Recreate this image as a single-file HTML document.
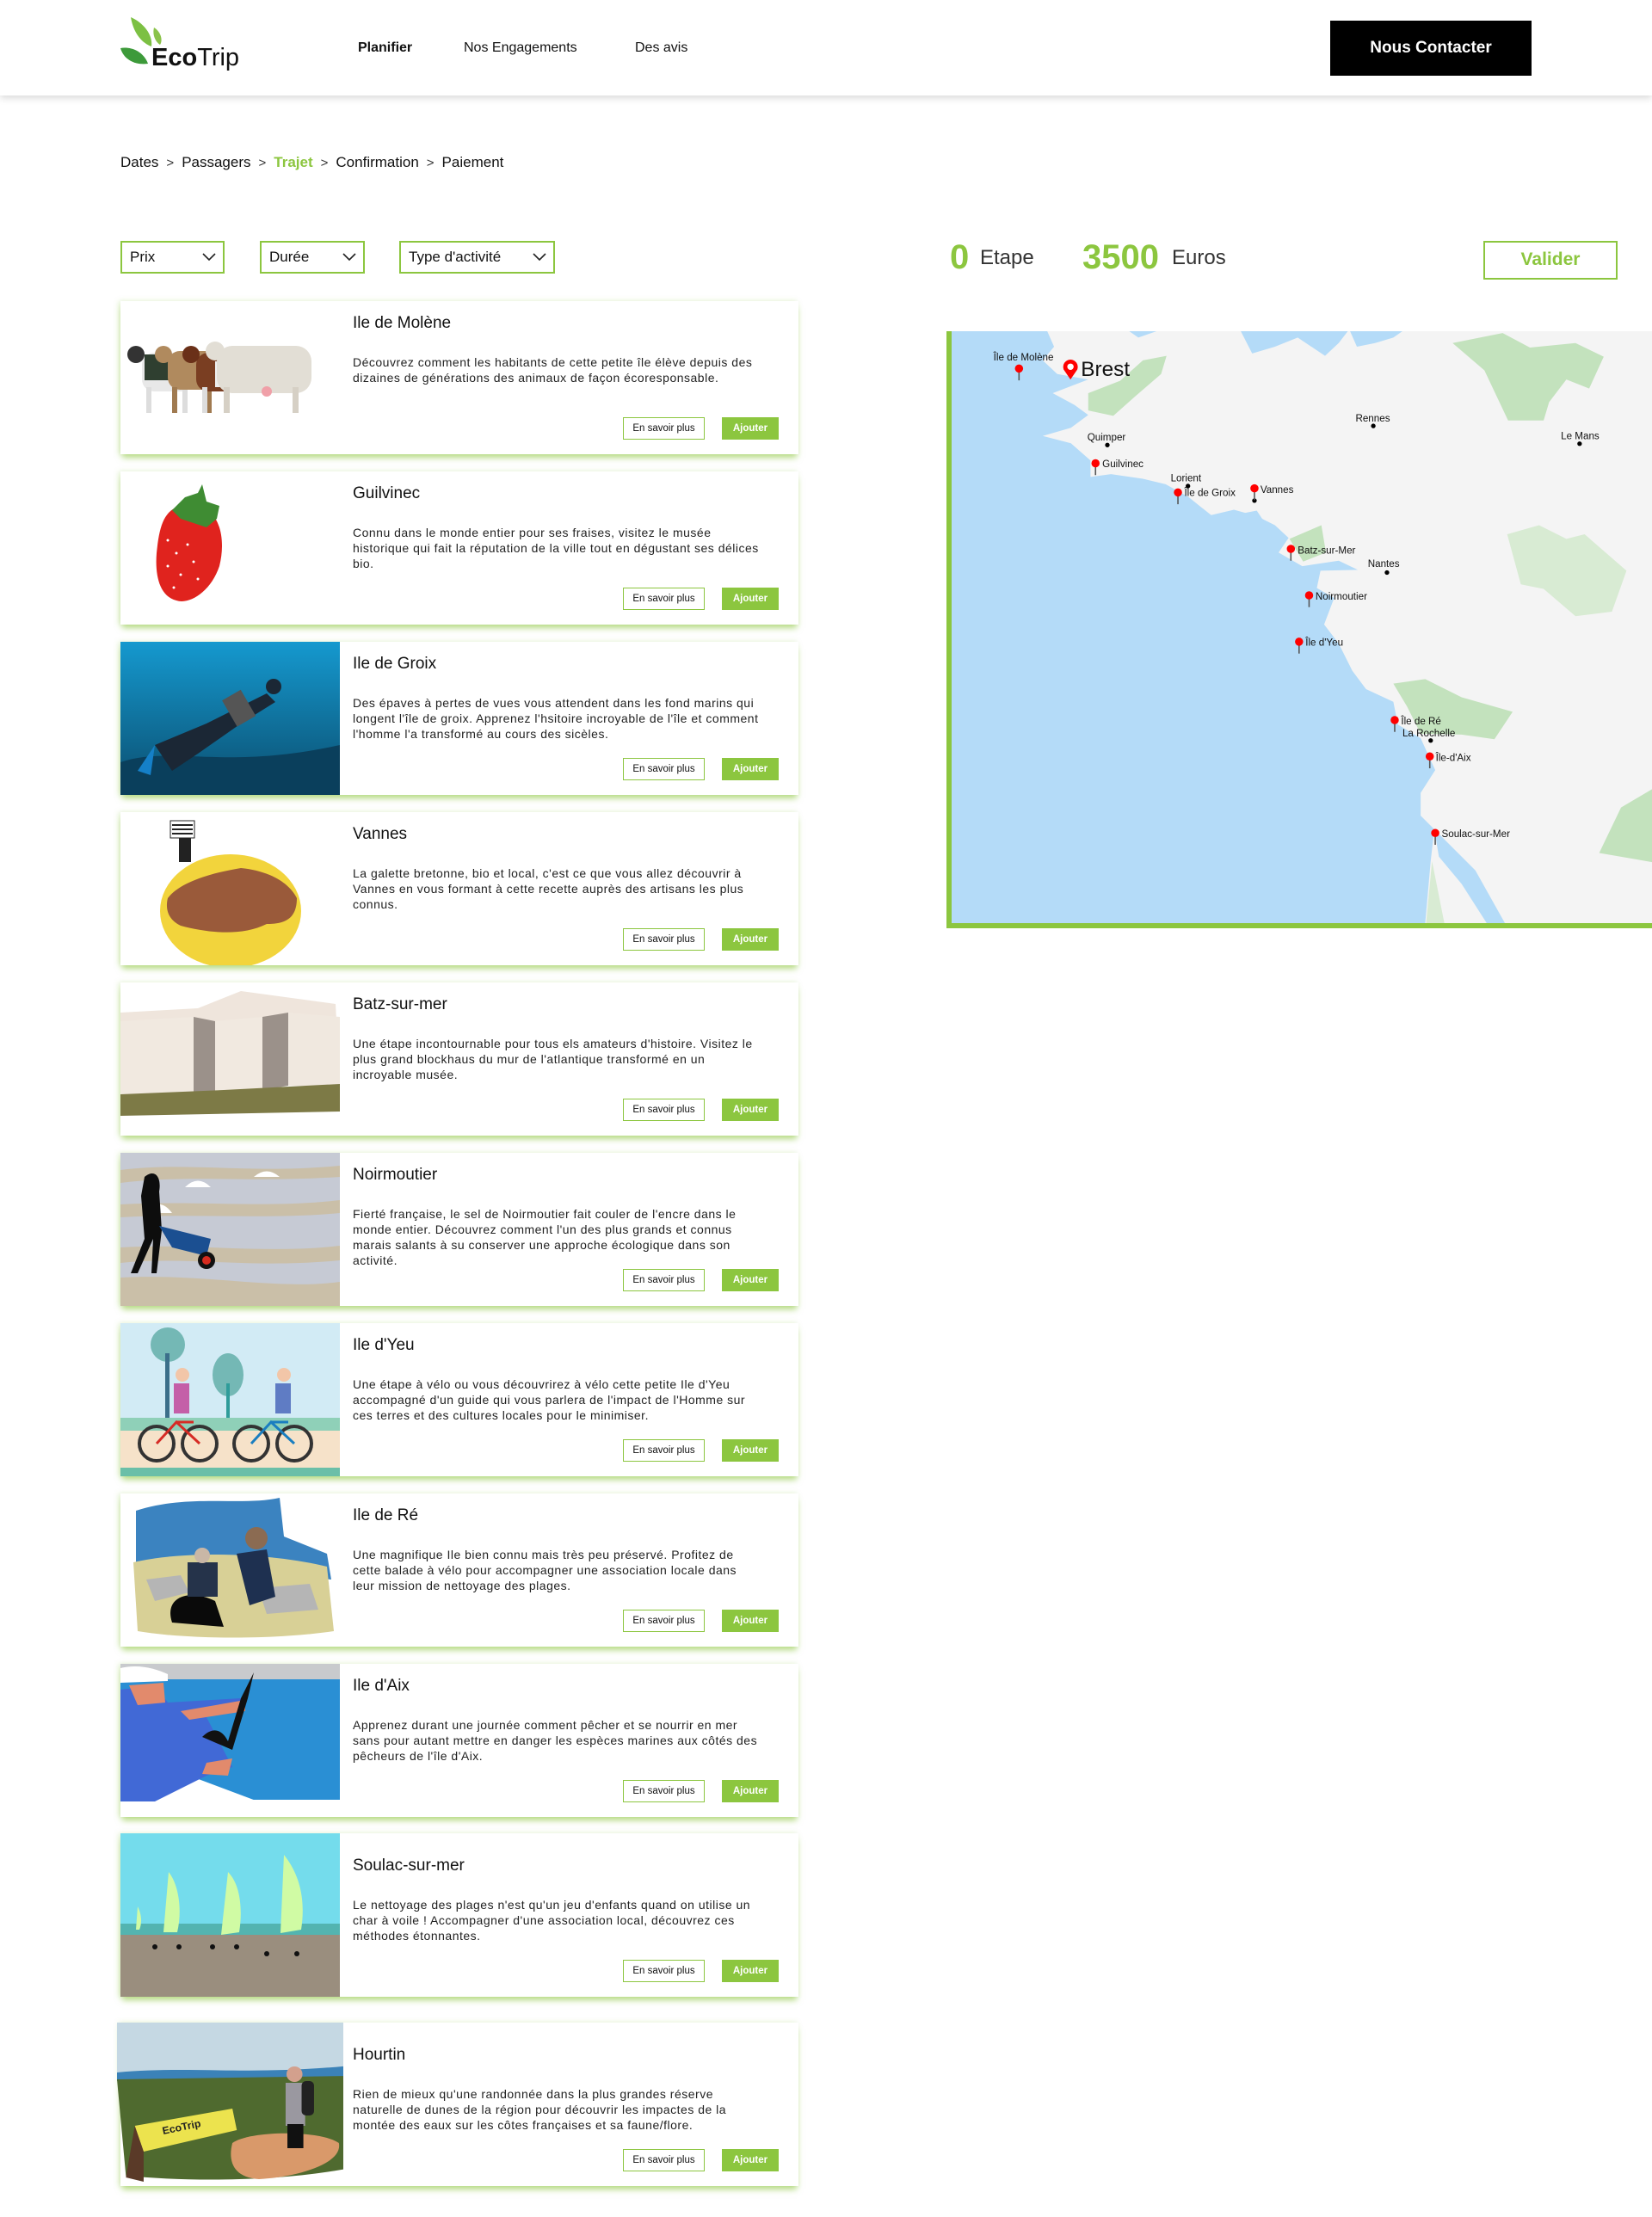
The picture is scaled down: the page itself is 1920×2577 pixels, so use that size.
<!DOCTYPE html>
<html><head><meta charset="utf-8">
<style>
*{margin:0;padding:0;box-sizing:border-box}
body{width:1920px;height:2577px;background:#fff;font-family:"Liberation Sans",Arial,sans-serif;color:#111;position:relative;overflow:hidden}
.abs{position:absolute}
header{position:absolute;left:0;top:0;width:1920px;height:111px;background:#fff;box-shadow:0 3px 8px rgba(0,0,0,.15)}
.nav{position:absolute;top:47px;font-size:16px;color:#111}
.btnc{position:absolute;left:1546px;top:24px;width:234px;height:64px;background:#000;color:#fff;font-weight:bold;font-size:19px;text-align:center;line-height:64px}
.bc{position:absolute;top:179px;left:140px;font-size:17px;color:#111;white-space:nowrap}
.bc .s{display:inline-block;margin:0 9px;color:#333;font-size:15px}
.sel{position:absolute;top:280px;height:38px;border:2px solid #8cc63f;font-size:17px;line-height:34px;padding-left:9px}
.sel svg{position:absolute;right:8px;top:12px}
.card{position:absolute;left:140px;width:788px;background:#fff;box-shadow:0 6px 7px -2px rgba(141,198,63,.6),-2px 0 6px rgba(141,198,63,.25)}
.card>svg{position:absolute;left:0;top:0;width:255px;height:100%}
.card h3{position:absolute;left:270px;font-size:19px;font-weight:normal;line-height:22px;color:#111}
.card p{position:absolute;left:270px;width:472px;font-size:14px;letter-spacing:.5px;line-height:18px;color:#222}
.b1,.b2{position:absolute;height:26px;font-size:11.5px;text-align:center;line-height:24px}
.b1{left:584px;width:95px;border:1.5px solid #8cc63f;color:#111;background:#fff}
.b2{left:699px;width:66px;background:#8cc63f;color:#fff;font-weight:bold;line-height:26px}
</style></head><body>
<header>
<svg class="abs" style="left:136px;top:18px" width="60" height="64" viewBox="0 0 60 64">
<path d="M16 2 C30 8 42 22 40 36 C34 34 20 26 16 2 Z" fill="#7cc043"/>
<path d="M43 14 C50 18 54 28 50 34 C44 30 41 22 43 14Z" fill="#8bc34a"/>
<path d="M4 38 C14 36 30 40 36 56 C22 58 8 52 4 38Z" fill="#3d9a3a"/>
</svg>
<div class="abs" style="left:176px;top:50px;font-size:29px;line-height:34px;color:#111"><b>Eco</b>Trip</div>
<div class="nav" style="left:416px;font-weight:bold">Planifier</div>
<div class="nav" style="left:539px">Nos Engagements</div>
<div class="nav" style="left:738px">Des avis</div>
<div class="btnc">Nous Contacter</div>
</header>

<div class="bc">Dates<span class="s">&gt;</span>Passagers<span class="s">&gt;</span><span style="color:#8cc63f;font-weight:bold">Trajet</span><span class="s">&gt;</span>Confirmation<span class="s">&gt;</span>Paiement</div>

<div class="sel" style="left:140px;width:121px">Prix<svg width="16" height="10"><path d="M1 1 L8 8 L15 1" stroke="#222" stroke-width="1.6" fill="none"/></svg></div>
<div class="sel" style="left:302px;width:122px">Durée<svg width="16" height="10"><path d="M1 1 L8 8 L15 1" stroke="#222" stroke-width="1.6" fill="none"/></svg></div>
<div class="sel" style="left:464px;width:181px">Type d'activité<svg width="16" height="10"><path d="M1 1 L8 8 L15 1" stroke="#222" stroke-width="1.6" fill="none"/></svg></div>

<div class="abs" style="left:1104px;top:276px;font-size:40px;font-weight:bold;color:#8cc63f;line-height:46px">0</div>
<div class="abs" style="left:1139px;top:286px;font-size:24px;color:#333;line-height:28px">Etape</div>
<div class="abs" style="left:1258px;top:276px;font-size:40px;font-weight:bold;color:#8cc63f;line-height:46px">3500</div>
<div class="abs" style="left:1362px;top:286px;font-size:24px;color:#333;line-height:28px">Euros</div>
<div class="abs" style="left:1724px;top:280px;width:156px;height:45px;border:2.5px solid #8cc63f;color:#8cc63f;font-size:21px;font-weight:bold;text-align:center;line-height:40px">Valider</div>

<!-- MAP -->
<div class="abs" style="left:1100px;top:385px;width:820px;height:694px;border-left:6px solid #8cc63f;border-bottom:6px solid #8cc63f;overflow:hidden">
<svg width="814" height="688" viewBox="30 236 1538 1300" preserveAspectRatio="none" style="display:block">
<rect x="30" y="236" width="1538" height="1300" fill="#b4dbf8"/>
<path d="M240 236 L255 270 L230 300 L262 330 L330 342 L252 372 L300 398 L330 420 L292 448 L230 466 L292 482 L335 520 L335 556 L380 550 L450 560 L500 572 L550 600 L600 640 L650 628 L700 642 L740 662 L770 690 L748 722 L800 752 L880 740 L922 760 L840 762 L832 800 L870 822 L848 880 L880 922 L910 982 L940 1022 L1000 1050 L1010 1100 L1060 1130 L1092 1200 L1060 1250 L1060 1300 L1090 1330 L1082 1400 L1070 1536 L1568 1536 L1568 236 Z" fill="#f4f4f4"/>
<path d="M665 236 L690 285 L740 270 L790 250 L850 290 L880 262 L900 236 Z M905 236 L920 270 L960 262 L1000 250 L1020 236Z M420 236 L440 250 L480 236Z" fill="#b4dbf8"/>
<path d="M1090 1330 L1120 1360 L1180 1420 L1245 1536 L1205 1536 L1150 1450 L1100 1390Z M650 640 L700 630 L720 660 L670 668Z M580 720 L620 740 L600 750 L575 735Z" fill="#b4dbf8"/>
<path d="M330 372 L400 345 L450 300 L502 290 L490 330 L432 380 L385 422 L330 410Z" fill="#c3e2bd"/>
<path d="M1130 262 L1240 240 L1300 272 L1400 262 L1462 292 L1430 362 L1380 342 L1342 392 L1330 432 L1252 432 L1200 322Z" fill="#c3e2bd"/>
<path d="M1250 682 L1320 662 L1380 692 L1420 682 L1512 762 L1480 852 L1400 862 L1330 802 L1280 792Z" fill="#d8ebd3"/>
<path d="M772 692 L842 662 L852 722 L802 742Z" fill="#c3e2bd"/>
<path d="M1000 1010 L1070 1000 L1150 1040 L1262 1072 L1222 1132 L1150 1122 L1060 1120 L1030 1060Z" fill="#c3e2bd"/>
<path d="M1500 1282 L1568 1242 L1568 1402 L1452 1382Z" fill="#c3e2bd"/>
<path d="M1085 1400 L1112 1536 L1072 1536Z" fill="#d8ebd3"/>
<g fill="#000">
<circle cx="372" cy="486" r="5"/><circle cx="549" cy="576" r="5"/><circle cx="956" cy="444" r="5"/><circle cx="1409" cy="483" r="5"/><circle cx="986" cy="766" r="5"/><circle cx="1082" cy="1135" r="5"/><circle cx="695" cy="608" r="5"/>
</g>
<g stroke="#555" stroke-width="3">
<line x1="178" y1="320" x2="178" y2="344"/><line x1="346" y1="528" x2="346" y2="552"/><line x1="527" y1="592" x2="527" y2="616"/><line x1="695" y1="583" x2="695" y2="607"/><line x1="775" y1="716" x2="775" y2="740"/><line x1="815" y1="818" x2="815" y2="842"/><line x1="793" y1="920" x2="793" y2="944"/><line x1="1003" y1="1092" x2="1003" y2="1116"/><line x1="1080" y1="1172" x2="1080" y2="1196"/><line x1="1092" y1="1340" x2="1092" y2="1364"/>
</g>
<g fill="#f00">
<circle cx="178" cy="318" r="9"/><circle cx="346" cy="526" r="9"/><circle cx="527" cy="590" r="9"/><circle cx="695" cy="581" r="9"/><circle cx="775" cy="714" r="9"/><circle cx="815" cy="816" r="9"/><circle cx="793" cy="918" r="9"/><circle cx="1003" cy="1090" r="9"/><circle cx="1080" cy="1170" r="9"/><circle cx="1092" cy="1338" r="9"/>
</g>
<path d="M291 342 L276 320 A16 16 0 1 1 306 320 Z" fill="#f00"/><circle cx="291" cy="314" r="7" fill="#fff"/>
<g font-family="Liberation Sans, sans-serif" font-size="22" fill="#111">
<text x="122" y="300">Île de Molène</text>
<text x="314" y="334" font-size="46">Brest</text>
<text x="328" y="476">Quimper</text>
<text x="361" y="535">Guilvinec</text>
<text x="511" y="566">Lorient</text>
<text x="541" y="598">Île de Groix</text>
<text x="708" y="591">Vannes</text>
<text x="790" y="724">Batz-sur-Mer</text>
<text x="944" y="754">Nantes</text>
<text x="829" y="826">Noirmoutier</text>
<text x="807" y="927">Île d'Yeu</text>
<text x="917" y="434">Rennes</text>
<text x="1368" y="473">Le Mans</text>
<text x="1017" y="1100">Île de Ré</text>
<text x="1020" y="1126">La Rochelle</text>
<text x="1093" y="1180">Île-d'Aix</text>
<text x="1106" y="1347">Soulac-sur-Mer</text>
</g>
</svg>
</div>

<!-- CARDS -->
<div class="card" style="top:350px;height:178px">
<svg viewBox="0 0 255 178" preserveAspectRatio="none">
<g><rect x="25" y="60" width="60" height="45" rx="14" fill="#e8e8e8"/><rect x="28" y="62" width="30" height="30" fill="#2f3f30"/><rect x="30" y="100" width="6" height="30" fill="#ddd"/><rect x="72" y="100" width="6" height="30" fill="#ddd"/><circle cx="18" cy="62" r="10" fill="#333"/>
<rect x="55" y="58" width="60" height="45" rx="14" fill="#b08a5e"/><rect x="60" y="100" width="6" height="30" fill="#a07a50"/><rect x="100" y="100" width="6" height="30" fill="#a07a50"/><circle cx="50" cy="62" r="10" fill="#b08a5e"/>
<rect x="88" y="60" width="55" height="45" rx="14" fill="#7a3e22"/><rect x="110" y="70" width="30" height="30" fill="#eee"/><rect x="95" y="100" width="6" height="30" fill="#ddd"/><circle cx="82" cy="62" r="10" fill="#6a3018"/>
<rect x="112" y="52" width="110" height="55" rx="18" fill="#e2ded5"/><rect x="120" y="100" width="7" height="30" fill="#d6d0c5"/><rect x="200" y="100" width="7" height="30" fill="#d6d0c5"/><circle cx="170" cy="105" r="6" fill="#f0a0a8"/><circle cx="110" cy="58" r="11" fill="#e2ded5"/></g>
</svg>
<h3 style="top:15px">Ile de Molène</h3>
<p style="top:62px">Découvrez comment les habitants de cette petite île élève depuis des dizaines de générations des animaux de façon écoresponsable.</p>
<div class="b1" style="top:135px">En savoir plus</div><div class="b2" style="top:135px">Ajouter</div>
</div>

<div class="card" style="top:548px;height:178px">
<svg viewBox="0 0 255 178" preserveAspectRatio="none">
<path d="M70 40 C110 30 125 70 115 110 C105 140 80 155 65 150 C45 145 40 120 42 95 C45 65 50 45 70 40Z" fill="#e0231e"/>
<path d="M60 45 L75 30 L90 25 L95 15 L100 35 L115 40 L112 55 L100 65 L85 60 L70 55Z" fill="#3f8c33"/>
<g fill="#fff"><circle cx="55" cy="80" r="1.5"/><circle cx="65" cy="95" r="1.5"/><circle cx="78" cy="85" r="1.5"/><circle cx="55" cy="110" r="1.5"/><circle cx="70" cy="120" r="1.5"/><circle cx="85" cy="105" r="1.5"/><circle cx="62" cy="135" r="1.5"/><circle cx="90" cy="125" r="1.5"/></g>
</svg>
<h3 style="top:15px">Guilvinec</h3>
<p style="top:62px">Connu dans le monde entier pour ses fraises, visitez le musée historique qui fait la réputation de la ville tout en dégustant ses délices bio.</p>
<div class="b1" style="top:135px">En savoir plus</div><div class="b2" style="top:135px">Ajouter</div>
</div>

<div class="card" style="top:746px;height:178px">
<svg viewBox="0 0 255 178" preserveAspectRatio="none">
<defs><linearGradient id="g1" x1="0" y1="0" x2="0" y2="1"><stop offset="0" stop-color="#1599cf"/><stop offset="1" stop-color="#0b4d6e"/></linearGradient></defs>
<rect width="255" height="178" fill="url(#g1)"/>
<path d="M0 140 C60 120 120 150 255 120 L255 178 L0 178Z" fill="#0a3f5c"/>
<path d="M40 120 L100 95 L130 80 L170 60 L180 70 L140 95 L90 130 L60 150Z" fill="#1b2735"/>
<rect x="125" y="60" width="25" height="35" fill="#555" transform="rotate(-30 137 77)"/>
<circle cx="178" cy="52" r="9" fill="#1b2735"/>
<path d="M40 120 L20 150 L35 155Z" fill="#1580c8"/>
</svg>
<h3 style="top:15px">Ile de Groix</h3>
<p style="top:62px">Des épaves à pertes de vues vous attendent dans les fond marins qui longent l'île de groix. Apprenez l'hsitoire incroyable de l'île et comment l'homme l'a transformé au cours des sicèles.</p>
<div class="b1" style="top:135px">En savoir plus</div><div class="b2" style="top:135px">Ajouter</div>
</div>

<div class="card" style="top:944px;height:178px">
<svg viewBox="0 0 255 178" preserveAspectRatio="none">
<ellipse cx="128" cy="115" rx="82" ry="66" fill="#f2d43c"/>
<path d="M55 100 C70 80 110 70 140 65 C170 68 195 80 205 100 C205 125 190 130 170 130 C140 145 100 140 70 132 C55 125 52 112 55 100Z" fill="#9a5a3a"/>
<rect x="58" y="10" width="28" height="20" fill="#fff" stroke="#222"/><path d="M60 15 H84 M60 20 H84 M60 25 H84" stroke="#222" stroke-width="2"/>
<rect x="68" y="30" width="14" height="28" fill="#222"/>
</svg>
<h3 style="top:15px">Vannes</h3>
<p style="top:62px">La galette bretonne, bio et local, c'est ce que vous allez découvrir à Vannes en vous formant à cette recette auprès des artisans les plus connus.</p>
<div class="b1" style="top:135px">En savoir plus</div><div class="b2" style="top:135px">Ajouter</div>
</div>

<div class="card" style="top:1142px;height:178px">
<svg viewBox="0 0 255 178" preserveAspectRatio="none">
<path d="M0 35 L90 30 L140 10 L250 25 L255 120 L0 120Z" fill="#efe5dc"/>
<path d="M0 45 L85 40 L85 130 L0 130Z" fill="#f1e9e0"/>
<path d="M85 40 L110 45 L110 130 L85 130Z" fill="#9b918a"/>
<path d="M110 45 L165 40 L165 125 L110 130Z" fill="#f1e9e0"/>
<path d="M165 40 L195 35 L195 120 L165 125Z" fill="#9b918a"/>
<path d="M195 35 L255 40 L255 118 L195 120Z" fill="#f0e8df"/>
<path d="M0 130 L120 125 L255 118 L255 150 L0 155Z" fill="#7d7a46"/>
</svg>
<h3 style="top:15px">Batz-sur-mer</h3>
<p style="top:62px">Une étape incontournable pour tous els amateurs d'histoire. Visitez le plus grand blockhaus du mur de l'atlantique transformé en un incroyable musée.</p>
<div class="b1" style="top:135px">En savoir plus</div><div class="b2" style="top:135px">Ajouter</div>
</div>

<div class="card" style="top:1340px;height:178px">
<svg viewBox="0 0 255 178" preserveAspectRatio="none">
<rect width="255" height="178" fill="#c6cad4"/>
<path d="M0 20 C80 10 150 25 255 15 L255 28 C150 35 80 25 0 35Z M0 60 C90 55 170 65 255 55 L255 70 C170 78 80 70 0 75Z M0 110 C90 105 170 118 255 108 L255 125 C150 135 80 120 0 128Z M0 145 C100 140 180 160 255 150 L255 178 L0 178Z" fill="#cabfa8"/>
<path d="M75 40 Q90 25 105 40Z M155 28 Q170 15 185 28Z M30 70 Q45 50 60 70Z" fill="#fff"/>
<path d="M28 28 C40 18 48 28 45 45 L48 90 L42 140 L36 140 L38 100 L20 140 L12 140 L28 100 L24 50Z" fill="#0d0d0d"/>
<path d="M45 85 L105 100 L100 120 L60 110Z" fill="#1b4f91"/>
<circle cx="100" cy="125" r="10" fill="#111"/><circle cx="100" cy="125" r="5" fill="#d62b1f"/>
</svg>
<h3 style="top:15px">Noirmoutier</h3>
<p style="top:62px">Fierté française, le sel de Noirmoutier fait couler de l'encre dans le monde entier. Découvrez comment l'un des plus grands et connus marais salants à su conserver une approche écologique dans son activité.</p>
<div class="b1" style="top:135px">En savoir plus</div><div class="b2" style="top:135px">Ajouter</div>
</div>

<div class="card" style="top:1538px;height:178px">
<svg viewBox="0 0 255 178" preserveAspectRatio="none">
<rect width="255" height="178" fill="#d2ebf5"/>
<rect y="110" width="255" height="15" fill="#8fd0b8"/>
<rect y="125" width="255" height="45" fill="#f6e2c9"/>
<rect y="168" width="255" height="10" fill="#6bbfa8"/>
<circle cx="55" cy="25" r="20" fill="#74b8b5"/><rect x="52" y="35" width="5" height="75" fill="#3c6f8a"/>
<ellipse cx="125" cy="60" rx="18" ry="25" fill="#74b8b5"/><rect x="123" y="70" width="4" height="40" fill="#2f9c9a"/>
<g fill="none" stroke="#333" stroke-width="4"><circle cx="42" cy="140" r="20"/><circle cx="92" cy="140" r="20"/><circle cx="152" cy="140" r="20"/><circle cx="202" cy="140" r="20"/></g>
<path d="M42 140 L65 115 L92 140 M65 115 L85 115" stroke="#d62b25" stroke-width="3" fill="none"/>
<path d="M152 140 L175 115 L202 140 M175 115 L195 115" stroke="#1a7ec0" stroke-width="3" fill="none"/>
<rect x="62" y="70" width="18" height="35" fill="#c45fa8"/><circle cx="72" cy="60" r="8" fill="#f2c6a8"/>
<rect x="180" y="70" width="18" height="35" fill="#5f7cc4"/><circle cx="190" cy="60" r="8" fill="#f2c6a8"/>
</svg>
<h3 style="top:15px">Ile d'Yeu</h3>
<p style="top:62px">Une étape à vélo ou vous découvrirez à vélo cette petite Ile d'Yeu accompagné d'un guide qui vous parlera de l'impact de l'Homme sur ces terres et des cultures locales pour le minimiser.</p>
<div class="b1" style="top:135px">En savoir plus</div><div class="b2" style="top:135px">Ajouter</div>
</div>

<div class="card" style="top:1736px;height:178px">
<svg viewBox="0 0 255 178" preserveAspectRatio="none">
<path d="M18 20 C80 0 140 15 185 5 L190 50 L240 70 L245 100 L18 80Z" fill="#3b83c0"/>
<path d="M15 80 C80 65 180 70 240 85 L248 160 C180 170 80 170 20 160Z" fill="#d8d096"/>
<g fill="#b5b5b5"><path d="M30 100 L70 95 L80 115 L40 125Z"/><path d="M160 110 L220 105 L230 135 L170 140Z"/></g>
<path d="M60 150 C50 120 80 110 110 125 L120 155Z" fill="#0a0a0a"/>
<rect x="78" y="80" width="35" height="40" fill="#25334a"/><circle cx="95" cy="72" r="9" fill="#c9b7a6"/>
<path d="M135 70 L170 65 L180 120 L150 130Z" fill="#1e3050"/><circle cx="158" cy="52" r="13" fill="#8b6b52"/>
</svg>
<h3 style="top:15px">Ile de Ré</h3>
<p style="top:62px">Une magnifique Ile bien connu mais très peu préservé. Profitez de cette balade à vélo pour accompagner une association locale dans leur mission de nettoyage des plages.</p>
<div class="b1" style="top:135px">En savoir plus</div><div class="b2" style="top:135px">Ajouter</div>
</div>

<div class="card" style="top:1934px;height:178px">
<svg viewBox="0 0 255 178" preserveAspectRatio="none">
<rect width="255" height="178" fill="#fff"/>
<rect width="255" height="20" fill="#c8cacd"/>
<rect y="18" width="255" height="140" fill="#2a8fd4"/>
<path d="M0 100 L200 175 L0 178Z" fill="#fff"/>
<path d="M0 5 C20 0 40 5 55 12 L55 20 L0 22Z" fill="#fff"/>
<path d="M0 30 L40 25 L55 45 L140 40 L145 55 L100 62 L130 120 L100 130 L40 160 L0 160Z" fill="#4169d6"/>
<path d="M10 25 L50 22 L52 45 L20 48Z M70 55 L145 42 L145 55 L80 65Z M100 115 L130 110 L125 130 L95 128Z" fill="#e28a6c"/>
<path d="M95 85 C110 70 120 80 125 90 L140 40 L155 10 L148 40 L130 100Z" fill="#111"/>
</svg>
<h3 style="top:15px">Ile d'Aix</h3>
<p style="top:62px">Apprenez durant une journée comment pêcher et se nourrir en mer sans pour autant mettre en danger les espèces marines aux côtés des pêcheurs de l'île d'Aix.</p>
<div class="b1" style="top:135px">En savoir plus</div><div class="b2" style="top:135px">Ajouter</div>
</div>

<div class="card" style="top:2131px;height:190px">
<svg viewBox="0 0 255 190" preserveAspectRatio="none">
<rect width="255" height="190" fill="#74dcec"/>
<rect y="105" width="255" height="18" fill="#53b4b0"/>
<rect y="118" width="255" height="72" fill="#9a8e7e"/>
<path d="M56 45 C68 60 72 90 66 115 L50 115Z M125 45 C140 60 142 90 138 115 L117 118Z M190 25 C210 50 215 80 210 112 L186 116Z M20 85 C25 95 25 105 22 112 L18 112Z" fill="#d0fba4"/>
<g fill="#111"><circle cx="40" cy="132" r="3"/><circle cx="68" cy="132" r="3"/><circle cx="107" cy="132" r="3"/><circle cx="135" cy="132" r="3"/><circle cx="170" cy="140" r="3"/><circle cx="205" cy="140" r="3"/></g>
</svg>
<h3 style="top:27px">Soulac-sur-mer</h3>
<p style="top:74px">Le nettoyage des plages n'est qu'un jeu d'enfants quand on utilise un char à voile ! Accompagner d'une association local, découvrez ces méthodes étonnantes.</p>
<div class="b1" style="top:147px">En savoir plus</div><div class="b2" style="top:147px">Ajouter</div>
</div>

<div class="card" style="top:2351px;height:190px">
<svg viewBox="0 0 255 190" preserveAspectRatio="none" style="left:-4px;width:263px">
<rect width="263" height="60" fill="#c5d8e3"/>
<path d="M0 58 C80 50 150 62 263 50 L263 65 C150 72 80 62 0 68Z" fill="#3b82b8"/>
<path d="M0 66 L263 62 L258 170 C180 185 80 185 10 178Z" fill="#4f6a2f"/>
<path d="M130 140 C150 125 230 125 250 140 C255 165 200 180 160 182 C130 180 125 160 130 140Z" fill="#d9996a"/>
<path d="M20 120 L130 100 L135 125 L30 150Z" fill="#ece34e"/>
<path d="M20 120 L30 150 L30 185 L10 180Z" fill="#5a3a28"/>
<text x="52" y="130" font-family="Liberation Sans, sans-serif" font-size="12" font-weight="bold" fill="#222" transform="rotate(-12 52 130)">EcoTrip</text>
<circle cx="200" cy="60" r="9" fill="#d3a08d"/>
<rect x="190" y="70" width="22" height="50" fill="#9a98a0"/><rect x="208" y="68" width="14" height="40" rx="5" fill="#222"/>
<rect x="192" y="118" width="18" height="28" fill="#111"/>
</svg>
<h3 style="top:27px">Hourtin</h3>
<p style="top:74px">Rien de mieux qu'une randonnée dans la plus grandes réserve naturelle de dunes de la région pour découvrir les impactes de la montée des eaux sur les côtes françaises et sa faune/flore.</p>
<div class="b1" style="top:147px">En savoir plus</div><div class="b2" style="top:147px">Ajouter</div>
</div>

</body></html>
